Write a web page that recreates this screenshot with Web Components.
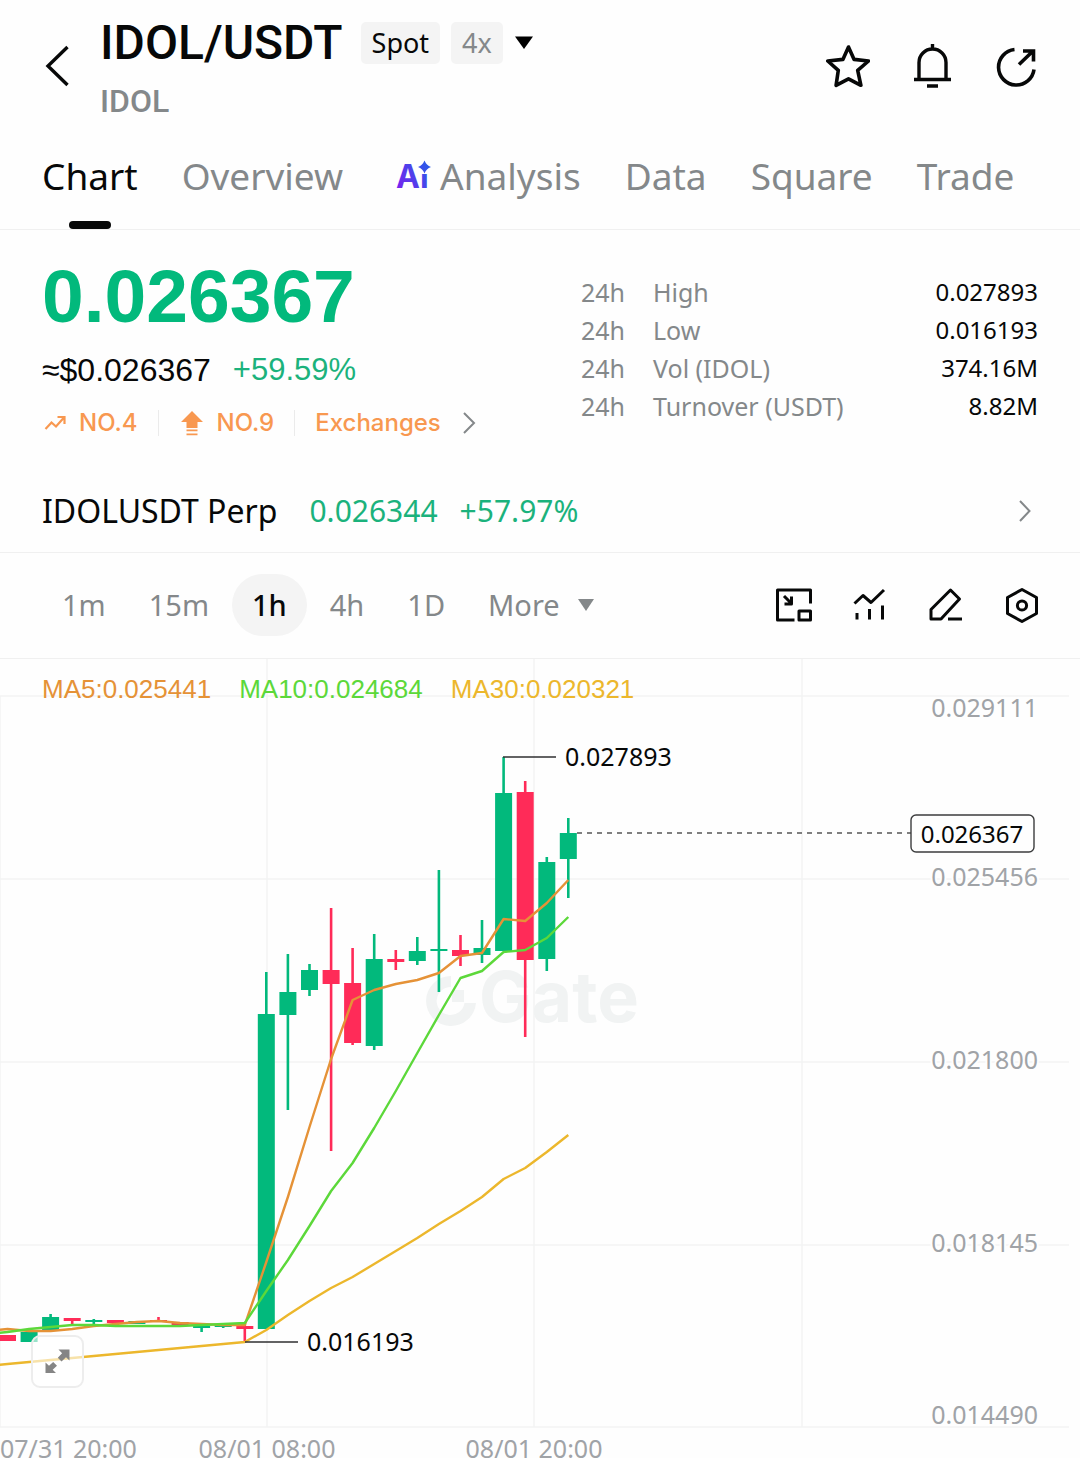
<!DOCTYPE html>
<html lang="en">
<head>
<meta charset="utf-8">
<meta name="viewport" content="width=device-width, initial-scale=1">
<title>IDOL/USDT</title>
<style>
  body {
    --ink: #070808;
    --muted: #84888a;
    --faint: #a0a3a7;
    --line: #f3f4f4;
    --rule: #f0f0f0;
    --chip: #f4f4f4;
    --up: #02b97c;
    --down: #ff2b58;
    --rank: #f89850;
    --gutter: 42px;
    --grotesk: "Liberation Sans", Arial, sans-serif;
    margin: 0;
    background: #fefefe;
    color: var(--ink);
    font-family: "Noto Sans", sans-serif;
  }
</style>
</head>
<body>
<market-header pair="IDOL/USDT" name="IDOL">
  <pair-tag>Spot</pair-tag>
  <pair-tag muted>4x</pair-tag>
</market-header>
<nav-tabs></nav-tabs>
<main>
  <price-summary></price-summary>
  <perp-link></perp-link>
  <interval-bar></interval-bar>
  <candle-chart></candle-chart>
</main>

<script>
/** Button, link and list resets shared by every element. */
const RESET = `
  * { box-sizing: border-box; }
  :host { display: block; }
  button { margin: 0; padding: 0; border: 0; background: none; color: inherit; font: inherit; cursor: pointer; }
  a { color: inherit; text-decoration: none; }
  svg { display: block; flex: none; }
`;

/**
 * Base class: renders the template of the subclass in an open shadow root.
 * @extends HTMLElement
 */
class BaseElement extends HTMLElement {
    connectedCallback() {
        if (this.shadowRoot) return;
        const shadow = this.attachShadow({ mode: 'open' });
        shadow.innerHTML = `<style>${RESET}${this.styles()}</style>${this.render()}`;
    }
}

/** Small grey label beside the pair name. */
class PairTag extends BaseElement {
    styles() {
        return `
      :host {
        padding: 0 11px;
        border-radius: 5px;
        background: var(--chip);
        font-size: 27px;
        line-height: 42px;
      }
      :host([muted]) { color: var(--muted); }
    `;
    }

    render() { return '<slot></slot>'; }
}
customElements.define('pair-tag', PairTag);

/** Top bar: back, pair name and page actions. */
class MarketHeader extends BaseElement {
    styles() {
        return `
      header {
        display: flex;
        align-items: center;
        padding: 12px var(--gutter) 10px;
      }
      .back { margin-right: 28px; }
      .pair { flex: 1; font-family: Roboto, sans-serif; }
      .row { display: flex; align-items: center; gap: 11px; }
      h1 { margin: 0 7px 0 0; font-size: 48px; font-weight: 500; line-height: 62px; }
      p { margin: 8px 0 0; color: var(--muted); font-size: 32px; font-weight: 500; line-height: 38px; }
      .tags { display: flex; gap: 11px; font-family: "Noto Sans", sans-serif; }
      .actions { display: flex; gap: 40px; }
    `;
    }

    render() {
        return `
      <header>
        <button class="back" aria-label="Back">
          <svg width="30" height="44" viewBox="0 0 30 44" fill="none" stroke="currentColor" stroke-width="3.4"><path d="M25.500 3 6 22 25.500 41"/></svg>
        </button>
        <div class="pair">
          <div class="row">
            <h1>${this.getAttribute('pair')}</h1>
            <div class="tags"><slot></slot></div>
            <button aria-label="Choose leverage">
              <svg width="20" height="14" viewBox="0 0 20 14"><path d="M1 .5h18L10 13z"/></svg>
            </button>
          </div>
          <p>${this.getAttribute('name')}</p>
        </div>
        <div class="actions">
          <button aria-label="Favourite">
            <svg width="44" height="44" viewBox="0 0 44 44" fill="none" stroke="currentColor" stroke-width="3.6" stroke-linejoin="round"><path d="M22.500 3l5.600 12.400 14.400 1.600-10.800 9.300 3.200 15L22.500 34.800 10.100 41.300l2.200-15L1.800 17l15.100-1.600z"/></svg>
          </button>
          <button aria-label="Alerts">
            <svg width="44" height="44" viewBox="0 0 44 44" fill="none" stroke="currentColor" stroke-width="3.4"><path d="M22.500 0v5M9 35V18.500a13.500 13.500 0 0 1 27 0V35M4 35.500h37M17 42h11"/></svg>
          </button>
          <button aria-label="Share">
            <svg width="44" height="44" viewBox="0 0 44 44" fill="none" stroke="currentColor" stroke-width="3.600"><path d="M20.500 5.500A17.800 17.800 0 1 0 40 25.500"/><path d="M25 20.500 39 7M29 7h10.500v10.500"/></svg>
          </button>
        </div>
      </header>`;
    }
}
customElements.define('market-header', MarketHeader);

/** Section tabs under the header. */
class NavTabs extends BaseElement {
    styles() {
        return `
      nav {
        display: flex;
        gap: 44px;
        padding: 0 var(--gutter);
        border-bottom: 1px solid var(--rule);
        white-space: nowrap;
      }
      a {
        display: flex;
        flex-direction: column;
        align-items: center;
        justify-content: space-between;
        padding-top: 22px;
        color: var(--muted);
        font-size: 37px;
        line-height: 48px;
      }
      a::after { content: ""; width: 42px; height: 8px; margin-top: 21px; border-radius: 4px; }
      a[aria-current] { color: var(--ink); }
      a[aria-current]::after { background: var(--ink); }
      .ai { display: flex; align-items: center; gap: 6px; padding-left: 9px; }
      .ai text { font: 700 32px Inter, sans-serif; }
    `;
    }

    render() {
        const ai = `
      <svg width="38" height="48" viewBox="0 0 38 48">
        <defs><linearGradient id="g" gradientUnits="userSpaceOnUse" x1="0" y1="36" x2="34" y2="14"><stop stop-color="#7a22ee"/><stop offset="1" stop-color="#2a5ae8"/></linearGradient></defs>
        <text x="0" y="36" fill="url(#g)">Ai</text>
        <path d="M24 7h10v15H24z" fill="#fefefe"/>
        <path fill="url(#g)" d="M28.500 8.500q1.800 4.700 6.500 6.500-4.700 1.800-6.500 6.500-1.800-4.700-6.500-6.500 4.700-1.800 6.500-6.500z"/>
      </svg>`;
        return `
      <nav aria-label="Market sections">
        <a href="#chart" aria-current="page">Chart</a>
        <a href="#overview">Overview</a>
        <a href="#analysis"><span class="ai">${ai}Analysis</span></a>
        <a href="#data">Data</a>
        <a href="#square">Square</a>
        <a href="#trade">Trade</a>
      </nav>`;
    }
}
customElements.define('nav-tabs', NavTabs);

/** Last price with its ranks, and the 24h figures. */
class PriceSummary extends BaseElement {
    styles() {
        return `
      section {
        display: flex;
        align-items: flex-start;
        justify-content: space-between;
        padding: 26px var(--gutter) 28px;
      }
      .last { display: grid; gap: 14px; font-family: var(--grotesk); }
      .price { color: var(--up); font-size: 75px; font-weight: 700; line-height: 80px; }
      .sub { display: flex; gap: 22px; font-size: 32px; line-height: 40px; }
      .sub .up { color: #1bb27c; font-size: 31px; }
      .ranks {
        display: flex;
        align-items: center;
        color: var(--rank);
        font: 500 24px/38px Inter, sans-serif;
      }
      .ranks a { display: flex; align-items: center; gap: 12px; }
      .ranks a + a { margin-left: 20px; padding-left: 21px; background: linear-gradient(#ebebeb, #ebebeb) left / 1px 26px no-repeat; }
      .ranks a:last-child { gap: 20px; }
      table { width: 457px; margin-top: 17px; border-collapse: collapse; font-size: 25px; line-height: 38px; }
      th, td { padding: 0; color: var(--muted); font-weight: 400; text-align: left; }
      th:first-child { width: 72px; }
      td { color: var(--ink); font-size: 24px; text-align: right; }
    `;
    }

    render() {
        const rows = [
            ['High', '0.027893'],
            ['Low', '0.016193'],
            ['Vol (IDOL)', '374.16M'],
            ['Turnover (USDT)', '8.82M']
        ].map(([label, value]) => `<tr><th>24h</th><th scope="row">${label}</th><td>${value}</td></tr>`).join('');
        return `
      <section>
        <div class="last">
          <div class="price">0.026367</div>
          <div class="sub"><span>≈$0.026367</span><span class="up">+59.59%</span></div>
          <div class="ranks">
            <a href="#trending">
              <svg width="25" height="24" viewBox="0 0 25 24" fill="none" stroke="currentColor" stroke-width="2.200"><path d="M3.500 18l6-6.500 4.500 4 8-9M15.500 6H22.500v7"/></svg>NO.4
            </a>
            <a href="#gainers">
              <svg width="26" height="26" viewBox="0 0 26 26" fill="currentColor"><path d="M13 1 24 12h-5.500v6h-11v-6H2zM7.500 19.500h11v1.800h-11zM7.500 23.500h11v1.800h-11z"/></svg>NO.9
            </a>
            <a href="#exchanges">Exchanges
              <svg width="16" height="22" viewBox="0 0 16 22" fill="none" stroke="#84888a" stroke-width="2"><path d="M3 1l10 10L3 21"/></svg>
            </a>
          </div>
        </div>
        <table>${rows}</table>
      </section>`;
    }
}
customElements.define('price-summary', PriceSummary);

/** Row that leads to the perpetual contract. */
class PerpLink extends BaseElement {
    styles() {
        return `
      a {
        display: flex;
        align-items: center;
        padding: 0 var(--gutter);
        border-bottom: 1px solid var(--rule);
        font-size: 32px;
        line-height: 82px;
      }
      .figures { display: flex; gap: 22px; flex: 1; margin-left: 32px; color: #1bb27c; font-size: 30px; }
    `;
    }

    render() {
        return `
      <a href="#perp">
        <span>IDOLUSDT Perp</span>
        <span class="figures"><span>0.026344</span><span>+57.97%</span></span>
        <svg width="22" height="22" viewBox="0 0 22 22" fill="none" stroke="#84888a" stroke-width="2"><path d="M4 1l9.500 10L4 21"/></svg>
      </a>`;
    }
}
customElements.define('perp-link', PerpLink);

/** Candle intervals and chart tools. */
class IntervalBar extends BaseElement {
    styles() {
        return `
      div { display: flex; align-items: center; }
      .bar {
        justify-content: space-between;
        padding: 21px 40px 22px var(--gutter);
        border-bottom: 1px solid var(--rule);
      }
      .intervals { gap: 3px; color: var(--muted); font-size: 29px; line-height: 62px; }
      .intervals button { display: flex; align-items: center; gap: 17px; padding: 0 20px; border-radius: 31px; }
      .intervals [aria-pressed=true] { background: var(--chip); color: var(--ink); font-weight: 500; }
      .tools { gap: 40px; }
    `;
    }

    render() {
        const intervals = ['1m', '15m', '1h', '4h', '1D']
            .map(item => `<button aria-pressed="${item === '1h'}">${item}</button>`)
            .join('');
        const tools = {
            'Floating window': '<path d="M34.500 16.500V3h-33v30h17"/><path d="M23 24h11.500v9H23zM8 9l7.500 7.500M8.500 17H15.500V9.500"/>',
            Indicators: '<path d="M2.500 16.500 11 8.500l8 7L32 3M5 26v6.500M17.500 22v10.500M30.500 18.500v14"/>',
            Draw: '<path d="M3 32V22.500L22.500 3l9 9L13 32zM20 32h14"/>',
            Settings: '<path d="M18 2.500 32.500 10.500v16L18 34.500 3.500 26.500V10.500z"/><circle cx="18" cy="18.500" r="4.600"/>'
        };
        const toolButtons = Object.entries(tools)
            .map(([label, shape]) => `<button aria-label="${label}"><svg width="36" height="36" viewBox="0 0 36 36" fill="none" stroke="currentColor" stroke-width="3" stroke-linejoin="round">${shape}</svg></button>`)
            .join('');
        return `
      <div class="bar">
        <div class="intervals">${intervals}
          <button>More <svg width="18" height="12" viewBox="0 0 18 12" fill="currentColor"><path d="M1 0h16L9 12z"/></svg></button>
        </div>
        <div class="tools">${toolButtons}</div>
      </div>`;
    }
}
customElements.define('interval-bar', IntervalBar);

// One candle per hour: direction, high, body top, body bottom, low.
const CANDLES = [
    ['down', 676, 676, 682, 682], ['up', 671, 673, 683, 683], ['up', 655, 658, 671, 671],
    ['down', 659, 659, 662, 665], ['up', 660, 661, 663, 666], ['down', 661, 661, 664, 664],
    ['up', 662, 662, 665, 665], ['down', 658, 661, 663, 663], ['down', 663, 663, 666, 666],
    ['up', 667, 667, 669, 673], ['up', 666, 666, 668, 669], ['down', 665, 667, 670, 683],
    ['up', 313, 355, 670, 670], ['up', 295, 333, 356, 451], ['up', 305, 311, 331, 337],
    ['down', 249, 311, 325, 492], ['down', 289, 324, 384, 386], ['up', 275, 300, 387, 391],
    ['down', 291, 300, 303, 311], ['up', 278, 292, 302, 306], ['up', 211, 290, 292, 333],
    ['down', 276, 291, 297, 307], ['up', 261, 289, 296, 304], ['up', 98, 134, 292, 292],
    ['down', 122, 133, 301, 378], ['up', 198, 203, 300, 312], ['up', 159, 174, 200, 239]
];

const AVERAGES = [
    { label: 'MA30:0.020321', color: '#ecb72c', points: [705, 703, 701, 699, 697, 695, 693, 691, 689, 687, 685, 683, 671, 656, 642, 629, 618, 605, 592, 579, 565, 552, 538, 520, 509, 493, 476] },
    { label: 'MA5:0.025441', color: '#e59237', points: [670, 672, 672, 670, 667, 665, 663, 662, 664, 665, 666, 666, 603, 538, 468, 400, 341, 331, 325, 321, 314, 297, 294, 260, 262, 244, 221] },
    { label: 'MA10:0.024684', color: '#5cd83a', points: [673, 670, 668, 666, 666, 667, 667, 667, 667, 666, 665, 664, 632, 601, 567, 532, 504, 469, 432, 394, 356, 319, 312, 293, 291, 279, 258] }
];

// Label, grid line and text baseline of each price on the axis.
const PRICES = [['0.029111', 37, 58], ['0.025456', 220, 227], ['0.021800', 403, 410], ['0.018145', 586, 593], ['0.014490', 768, 765]];

/**
 * Candlestick chart with moving averages.
 * @extends BaseElement
 */
class CandleChart extends BaseElement {
    styles() {
        return `
      :host { position: relative; }
      .plot { width: 100%; height: auto; }
      .plot text { font: 25px "Noto Sans", sans-serif; fill: var(--ink); }
      .plot .axis { fill: var(--faint); stroke: #fefefe; stroke-width: 4px; paint-order: stroke; }
      .plot .brand { fill: #f1f3f3; font: 700 70px Inter, sans-serif; }
      .plot .last { font-size: 24px; }
      .grid { stroke: var(--line); stroke-width: 1.5; }
      .up { fill: var(--up); stroke: var(--up); }
      .down { fill: var(--down); stroke: var(--down); }
      ul {
        position: absolute;
        top: 15px;
        left: var(--gutter);
        display: flex;
        gap: 28px;
        margin: 0;
        padding: 0;
        list-style: none;
        font: 26px/30px var(--grotesk);
      }
      .expand {
        position: absolute;
        bottom: 70px;
        left: 31px;
        padding: 10px;
        border: 2px solid #ededed;
        border-radius: 9px;
        background: rgba(255, 255, 255, 0.6);
        color: #858585;
      }
    `;
    }

    /**
     * Horizontal centre of a candle.
     * @param {number} index - The candle's place in the series.
     * @return {number} The x coordinate.
     */
    x(index) { return Math.round((7.5 + index * 21.57) * 10) / 10; }

    candle([trend, high, top, bottom, low], index) {
        const x = this.x(index);
        return `<g class="${trend}"><path stroke-width="2.600" d="M${x} ${high}V${low}"/><rect x="${x - 8.5}" y="${top}" width="17" height="${bottom - top}" stroke="none"/></g>`;
    }

    average({ color, points }) {
        const line = points.map((y, index) => `${this.x(index)},${y}`).join(' ');
        return `<polyline points="-14,${points[0] + 2} ${line}" fill="none" stroke="${color}" stroke-width="2.400" stroke-linejoin="round"/>`;
    }

    render() {
        const rows = PRICES.map(([, y]) => `M0 ${y}H1069`).join('');
        const prices = PRICES.map(([price, , y]) => `<text class="axis" x="1038" y="${y}" text-anchor="end">${price}</text>`).join('');
        const legend = [AVERAGES[1], AVERAGES[2], AVERAGES[0]]
            .map(({ label, color }) => `<li style="color: ${color}">${label}</li>`)
            .join('');
        return `
      <svg class="plot" viewBox="0 0 1080 799" role="img" aria-label="IDOL/USDT hourly candles">
        <path class="grid" d="${rows}M0 37V768M267 0V768M534 0V768M802 0V768"/>
        <g fill="#f1f3f3">
          <path d="M451 317v11a14 14 0 1 0 13.500 16H476A25 25 0 1 1 451 317z"/>
          <path d="M452 331h12v12h-12z"/>
          <text class="brand" x="479" y="363">Gate</text>
        </g>
        ${CANDLES.map((item, index) => this.candle(item, index)).join('')}
        ${AVERAGES.map(item => this.average(item)).join('')}
        <path d="M503 98H556M245 683H298" stroke="#303132" stroke-width="1.400"/>
        <text x="565" y="107">0.027893</text>
        <text x="307" y="692">0.016193</text>
        <path d="M577 174H911" stroke="#555" stroke-width="1.500" stroke-dasharray="5 5"/>
        ${prices}
        <rect x="911" y="156" width="123" height="37" rx="5" fill="#fefefe" stroke="#3c3d3e" stroke-width="1.400"/>
        <text class="last" x="972" y="184" text-anchor="middle">0.026367</text>
        <text class="axis" x="0" y="799">07/31 20:00</text>
        <text class="axis" x="267" y="799" text-anchor="middle">08/01 08:00</text>
        <text class="axis" x="534" y="799" text-anchor="middle">08/01 20:00</text>
      </svg>
      <ul>${legend}</ul>
      <button class="expand" aria-label="Full screen">
        <svg width="29" height="29" viewBox="0 0 29 29" fill="currentColor"><path d="M15.500 2.500h11v11l-3.500-3.300-4.500 4.300-3.700-3.700 4.300-4.500zM2.500 15.500l3.500 3.200 4.200-3.700 3.800 3.700-4.300 4 3.300 3.300H2.500z"/></svg>
      </button>`;
    }
}
customElements.define('candle-chart', CandleChart);
</script>
</body>
</html>
